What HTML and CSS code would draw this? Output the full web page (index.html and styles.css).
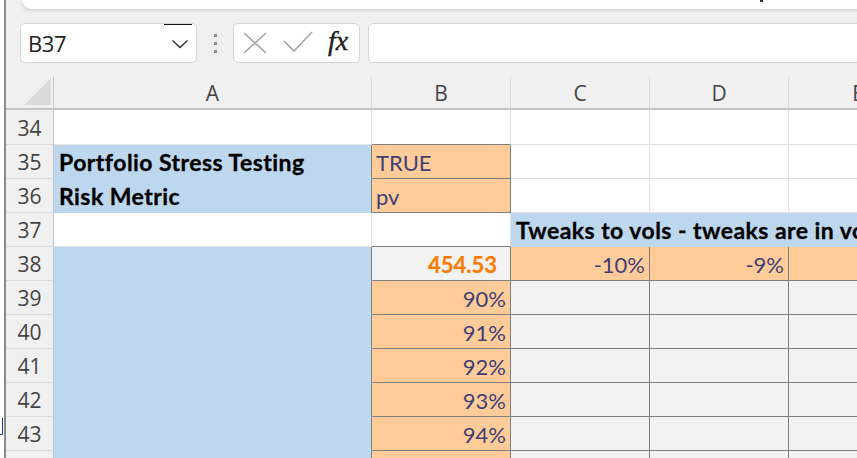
FILE: index.html
```html
<!DOCTYPE html>
<html>
<head>
<meta charset="utf-8">
<link rel="stylesheet" href="styles.css">
</head>
<body>
<div class="app">
  <div class="edge"><span class="edge-mark"></span></div>
  <div class="main">
    <div class="ribbon"><span class="ribbon-mark"></span></div>
    <div class="fbar">
      <div class="namebox">
        <span class="namebox-text">B37</span>
        <svg class="chev" width="18" height="10" viewBox="0 0 18 10"><path d="M1.5 1.5 L9 8.5 L16.5 1.5" fill="none" stroke="#333" stroke-width="1.5"/></svg>
        <span class="cursor-line"></span>
      </div>
      <div class="dots"><i></i><i></i><i></i></div>
      <div class="fbox">
        <svg class="xicon" width="24" height="22" viewBox="0 0 24 22"><path d="M1 1 L23 21 M23 1 L1 21" fill="none" stroke="#a6a6a6" stroke-width="1.6"/></svg>
        <svg class="chk" width="30" height="22" viewBox="0 0 30 22"><path d="M1 10 L11 20 L29 1" fill="none" stroke="#a6a6a6" stroke-width="1.6"/></svg>
        <span class="fx">fx</span>
      </div>
      <div class="finput"></div>
    </div>
    <div class="sheet">
      <div class="grid">
        <div class="corner"><span class="tri"></span></div>
        <div class="ch">A</div>
        <div class="ch">B</div>
        <div class="ch">C</div>
        <div class="ch">D</div>
        <div class="ch">E</div>

        <div class="rh first">34</div>
        <div class="c first"></div>
        <div class="c first db"></div>
        <div class="c first"></div>
        <div class="c first"></div>
        <div class="c first"></div>

        <div class="rh">35</div>
        <div class="c blue dr b">Portfolio Stress Testing</div>
        <div class="c inp">TRUE</div>
        <div class="c"></div>
        <div class="c"></div>
        <div class="c"></div>

        <div class="rh">36</div>
        <div class="c blue dr b">Risk Metric</div>
        <div class="c inp">pv</div>
        <div class="c"></div>
        <div class="c"></div>
        <div class="c"></div>

        <div class="rh">37</div>
        <div class="c"></div>
        <div class="c db"></div>
        <div class="c blue b span3">Tweaks to vols - tweaks are in volatility points</div>

        <div class="rh">38</div>
        <div class="c blue dr"></div>
        <div class="c calc calcv r">454.53</div>
        <div class="c inp r">-10%</div>
        <div class="c inp r">-9%</div>
        <div class="c inp r">-8%</div>

        <div class="rh">39</div>
        <div class="c blue dr"></div>
        <div class="c inp r">90%</div>
        <div class="c calc"></div>
        <div class="c calc"></div>
        <div class="c calc"></div>

        <div class="rh">40</div>
        <div class="c blue dr"></div>
        <div class="c inp r">91%</div>
        <div class="c calc"></div>
        <div class="c calc"></div>
        <div class="c calc"></div>

        <div class="rh">41</div>
        <div class="c blue dr"></div>
        <div class="c inp r">92%</div>
        <div class="c calc"></div>
        <div class="c calc"></div>
        <div class="c calc"></div>

        <div class="rh">42</div>
        <div class="c blue dr"></div>
        <div class="c inp r">93%</div>
        <div class="c calc"></div>
        <div class="c calc"></div>
        <div class="c calc"></div>

        <div class="rh">43</div>
        <div class="c blue dr"></div>
        <div class="c inp r">94%</div>
        <div class="c calc"></div>
        <div class="c calc"></div>
        <div class="c calc"></div>

        <div class="rh">44</div>
        <div class="c blue dr"></div>
        <div class="c inp r">95%</div>
        <div class="c calc"></div>
        <div class="c calc"></div>
        <div class="c calc"></div>
      </div>
    </div>
  </div>
</div>
</body>
</html>
```
FILE: styles.css
```css
* { box-sizing: border-box; }
html, body { margin: 0; padding: 0; }
body {
  width: 857px;
  height: 458px;
  overflow: hidden;
  background: #f0f0f0;
  font-family: "Open Sans", "Noto Sans", sans-serif;
}
.app {
  display: flex;
  height: 458px;
}
.edge {
  position: relative;
  width: 6px;
  flex: none;
  background: #fff;
  border-right: 2px solid #8a8a8a;
}
.edge-mark {
  position: absolute;
  left: 0;
  top: 418px;
  width: 3px;
  height: 17px;
  border-right: 1px solid #1a37a8;
  border-bottom: 1px solid #1a37a8;
}
.main {
  flex: 1;
  min-width: 0;
  display: flex;
  flex-direction: column;
  overflow: hidden;
}
.ribbon {
  position: relative;
  height: 9px;
  margin-left: 16px;
  margin-right: -20px;
  background: #fff;
  border-radius: 0 0 9px 9px;
  box-shadow: 0 1px 4px rgba(0,0,0,0.18);
  flex: none;
}
.ribbon-mark {
  position: absolute;
  left: 738px;
  top: 0;
  width: 3px;
  height: 2px;
  background: #333;
}
.fbar {
  display: flex;
  align-items: stretch;
  height: 40px;
  margin-top: 14px;
  flex: none;
}
.namebox {
  position: relative;
  width: 177px;
  margin-left: 14px;
  background: #fff;
  border: 1px solid #d6d6d6;
  border-radius: 5px;
  display: flex;
  align-items: center;
  padding-left: 7px;
}
.namebox-text {
  font-size: 22px;
  color: #222;
  letter-spacing: -0.4px;
}
.chev {
  position: absolute;
  left: 150px;
  top: 15px;
}
.cursor-line {
  position: absolute;
  left: 143px;
  top: 0;
  width: 28px;
  height: 1px;
  background: #111;
}
.dots {
  width: 36px;
  display: flex;
  flex-direction: column;
  align-items: center;
  justify-content: center;
  gap: 5px;
}
.dots i {
  display: block;
  width: 3px;
  height: 3px;
  background: #8c8c8c;
}
.fbox {
  width: 127px;
  background: #fff;
  border: 1px solid #d6d6d6;
  border-radius: 5px;
  display: flex;
  align-items: center;
  padding-left: 9px;
}
.xicon { margin-right: 16px; }
.chk { margin-right: 15px; margin-top: -2px; }
.fx {
  font-family: "Liberation Serif", "DejaVu Serif", serif;
  font-style: italic;
  font-size: 28px;
  color: #222;
  line-height: 1;
  margin-top: -4px;
  -webkit-text-stroke: 0.4px #222;
}
.finput {
  flex: 1;
  margin-left: 8px;
  margin-right: -10px;
  background: #fff;
  border: 1px solid #d6d6d6;
  border-radius: 5px;
}
.sheet {
  margin-top: 14px;
  flex: 1;
  overflow: hidden;
}
.grid {
  display: grid;
  grid-template-columns: 48px 318px 139px 139px 139px 139px;
  grid-template-rows: 33px 35px repeat(10, 34px);
  width: 922px;
}
.corner {
  position: relative;
  background: #f0f0f0;
  border-right: 1px solid #c8c8c8;
  border-bottom: 2px solid #c4c4c4;
}
.tri {
  position: absolute;
  left: 18px;
  top: 1px;
  width: 0;
  height: 0;
  border-left: 27px solid transparent;
  border-bottom: 27px solid #dadada;
}
.ch {
  background: #f0f0f0;
  border-right: 1px solid #d9d9d9;
  border-bottom: 2px solid #c4c4c4;
  display: flex;
  align-items: center;
  justify-content: center;
  font-size: 21px;
  color: #444;
  padding-top: 1px;
}
.rh {
  background: #f0f0f0;
  border-right: 1px solid #c4c4c4;
  border-bottom: 1px solid #dcdcdc;
  display: flex;
  align-items: center;
  justify-content: center;
  font-size: 21px;
  color: #444;
  padding-top: 1px;
}
.c {
  background: #fff;
  border-right: 1px solid #e1e1e1;
  border-bottom: 1px solid #e1e1e1;
  display: flex;
  align-items: flex-end;
  padding: 0 4px 4px 5px;
  font-family: Lato, "Open Sans", sans-serif;
  font-size: 22px;
  line-height: 1;
  color: #000;
  white-space: nowrap;
  overflow: hidden;
}
.blue { background: #bdd7ee; border-color: #bdd7ee; }
.inp { background: #ffcc99; border-color: #7f7f7f; color: #3f3f76; padding-left: 4px; }
.calc { background: #f2f2f2; border-color: #7f7f7f; }
.calcv { color: #fa7d00; font-weight: 700; padding-right: 13px; -webkit-text-stroke: 0.2px #fa7d00; }
.r { justify-content: flex-end; }
.b {
  font-weight: 700;
  font-size: 23px;
  letter-spacing: 0.45px;
  -webkit-text-stroke: 0.3px #000;
}
.dr { border-right-color: #7f7f7f; }
.db { border-bottom-color: #7f7f7f; }
.span3 { grid-column: span 3; border-right: 0; overflow: visible; }
```
